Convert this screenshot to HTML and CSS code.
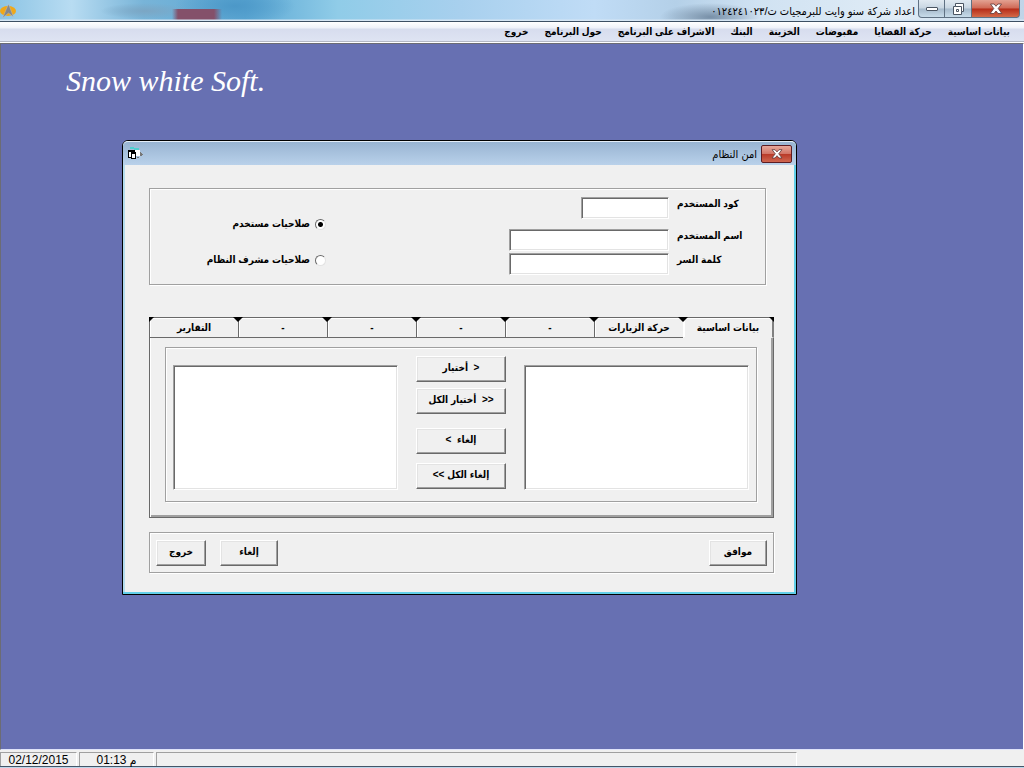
FILE: index.html
```html
<!DOCTYPE html>
<html lang="ar" dir="rtl">
<head>
<meta charset="utf-8">
<title>اعداد شركة سنو وايت للبرمجيات</title>
<link rel="stylesheet" href="styles.css">
</head>
<body>
<header class="titlebar">
  <div class="window-buttons">
    <button class="win-btn win-close" type="button" aria-label="إغلاق"><svg width="14" height="12" viewBox="0 0 14 12"><path d="M1.500 1h3.600L7 3.300 8.900 1h3.600L9.200 5.500l3.600 5H9L7 8l-2 2.500H1.200l3.600-5z" fill="#fff" stroke="#5d3838" stroke-width=".8"/></svg></button>
    <button class="win-btn" type="button" aria-label="استعادة"><svg width="14" height="14" viewBox="0 0 14 14"><path d="M4.500 1.500h8v8h-2v3h-8v-8h2z" fill="#fff" stroke="#4a5562"/><path d="M4.500 4.500h6v5M5.500 7.500h2v2h-2z" fill="none" stroke="#4a5562"/></svg></button>
    <button class="win-btn" type="button" aria-label="تصغير"><svg width="14" height="6" viewBox="0 0 14 6"><rect x="1.500" y="1.500" width="11" height="3" rx=".5" fill="#fff" stroke="#4a5562"/></svg></button>
  </div>
  <h1 class="app-title">اعداد شركة سنو وايت للبرمجيات ت/٠١٢٤٢٤١٠٢٣</h1>
  <svg class="app-icon" width="17" height="17" viewBox="0 0 17 17"><ellipse cx="8" cy="8" rx="8" ry="5" fill="#f0a818"/><path d="M8.500 1l5 13-5-4L2.500 15z" fill="#85878c" stroke="#c5c7ca" stroke-width=".4"/></svg>
</header>
<nav class="menubar">
  <button type="button">بيانات اساسية</button>
  <button type="button">حركة القضايا</button>
  <button type="button">مقبوضات</button>
  <button type="button">الخزينة</button>
  <button type="button">البنك</button>
  <button type="button">الاشراف على البرنامج</button>
  <button type="button">حول البرنامج</button>
  <button type="button">خروج</button>
</nav>
<main class="workspace">
  <p class="brand" dir="ltr">Snow white Soft.</p>
  <section class="dialog" aria-labelledby="dialog-title">
    <header class="dialog-bar">
      <button class="dialog-close" type="button" aria-label="إغلاق"><svg width="12" height="10" viewBox="0 0 12 10"><path d="M1 .7h3L6 2.900 8 .7h3L7.700 4.800 11 9H8L6 6.700 4 9H1l3.300-4.200z" fill="#fff" stroke="#5d3838" stroke-width=".8"/></svg></button>
      <h2 id="dialog-title">امن النظام</h2>
      <svg class="dialog-icon" width="17" height="13" viewBox="0 0 17 13" shape-rendering="crispEdges"><path d="M3 0h4v1h5v2H7V2H3z" fill="#4fd0d0"/><path d="M8 3h5v6H9z" fill="#fff"/><path d="M13 5h1v1h1v1h1v1h-1v1h-2zM10 10h2v1h-2z" fill="#777"/><path d="M1 3h7v8H1z" fill="#000"/><path d="M2 5h5v5H2z" fill="#fff"/><path d="M4 5h5v7H4z" fill="#000"/><path d="M5 7h3v4H5z" fill="#fff"/></svg>
    </header>
    <form class="dialog-body">
      <div class="frame user-frame">
        <div class="fields">
          <div class="field field-code"><label for="code">كود المستخدم</label><input class="short" id="code" type="text"></div>
          <div class="field"><label for="name">اسم المستخدم</label><input id="name" type="text"></div>
          <div class="field"><label for="pass">كلمة السر</label><input id="pass" type="password"></div>
        </div>
        <div class="roles">
          <label><input type="radio" name="role" checked>صلاحيات مستخدم</label>
          <label><input type="radio" name="role">صلاحيات مشرف النظام</label>
        </div>
      </div>
      <div class="tabs">
        <div class="tab-row" role="tablist">
          <button class="tab active" type="button" role="tab" aria-selected="true">بيانات اساسية</button>
          <button class="tab" type="button" role="tab">حركة الزيارات</button>
          <button class="tab" type="button" role="tab">-</button>
          <button class="tab" type="button" role="tab">-</button>
          <button class="tab" type="button" role="tab">-</button>
          <button class="tab" type="button" role="tab">-</button>
          <button class="tab" type="button" role="tab">التقارير</button>
        </div>
        <div class="tab-panel" role="tabpanel">
          <div class="frame picker">
            <select class="list" size="8" aria-label="المتاح"></select>
            <div class="moves">
              <button class="btn" type="button">&lt;&nbsp; أختيار</button>
              <button class="btn" type="button">&lt;&lt;&nbsp; أختيار الكل</button>
              <button class="btn remove" type="button">إلغاء &nbsp;&gt;</button>
              <button class="btn" type="button">إلغاء الكل &gt;&gt;</button>
            </div>
            <select class="list" size="8" aria-label="المختار"></select>
          </div>
        </div>
      </div>
      <div class="frame actions">
        <button class="btn ok" type="button">موافق</button>
        <button class="btn cancel" type="button">إلغاء</button>
        <button class="btn exit" type="button">خروج</button>
      </div>
    </form>
  </section>
</main>
<footer class="statusbar" dir="ltr">
  <span class="cell date">02/12/2015</span>
  <span class="cell time">01:13 م</span>
  <span class="cell message"></span>
</footer>
</body>
</html>
```
FILE: styles.css
```css
* { box-sizing: border-box; }
body {
  margin: 0;
  min-height: 100vh;
  display: flex;
  flex-direction: column;
  font: bold 10px/14px "Liberation Sans", "DejaVu Sans Condensed", "DejaVu Sans", sans-serif;
  color: #000;
  background: #f0f0f0;
}
button, input, select { font: inherit; color: inherit; margin: 0; }
h1, h2, p { margin: 0; font: inherit; }

.titlebar {
  height: 22px;
  display: flex;
  align-items: flex-start;
  padding: 0 4px 0 0;
  border-bottom: 1px solid #3d4f63;
  background:
    linear-gradient(transparent 19px, #d6e6f4 20px),
    linear-gradient(90deg, transparent 172px, #84506a 178px, #84506a 214px, transparent 222px) 0 9px / 100% 12px no-repeat,
    radial-gradient(ellipse 45px 8px at 145px 11px, #7ba6c4, transparent),
    radial-gradient(ellipse 60px 20px at 235px 6px, #4c98c8, transparent),
    radial-gradient(ellipse 50px 14px at 710px 17px, #7890a8, transparent),
    linear-gradient(90deg, #8cc4e4, #b8dcf2 7%, #78b4d8 14%, #5ca8d4 24%, #90cce8 33%, #a8d0ee 45%, #c0dcf6 58%, #b4d0e8 66%, #d0e2f2 74%, #e0ecf6 88%, #c0d4e8);
}
.window-buttons { display: flex; }
.win-btn {
  width: 27px;
  height: 18px;
  padding: 0;
  display: flex;
  align-items: center;
  justify-content: center;
  border: 1px solid #5f7183;
  border-top: 0;
  border-left-width: 0;
  background: linear-gradient(#e0e9f1, #c8d6e2 48%, #a5b9cb 52%, #c8dcea);
}
.win-btn:last-child { border-left-width: 1px; border-radius: 0 0 0 4px; }
.win-close {
  width: 48px;
  border-radius: 0 0 4px 0;
  background: linear-gradient(#e3a292, #cf6955 48%, #b52c18 52%, #d46a48);
}
.app-title { flex: 1; margin-right: 3px; font-size: 11px; line-height: 22px; font-weight: normal; white-space: nowrap; }
.app-icon { margin-top: 3px; }

.menubar {
  height: 21px;
  display: flex;
  gap: 16px;
  padding: 0 14px;
  border-bottom: 1px solid #fff;
  box-shadow: inset 0 -1px #b4b8c4;
  background: linear-gradient(#fff, #eef1f9 6px, #d7ddee 7px, #dfe4f3);
}
.menubar button { border: 0; padding: 0; background: none; white-space: nowrap; }

.workspace {
  flex: 1;
  position: relative;
  background: #6770b2;
  border: 1px solid #6c6c74;
  border-right-color: #fff;
  border-bottom-color: #dfe3fa;
}
.brand {
  padding: 19px 65px;
  font: italic 30px/36px "Liberation Serif", serif;
  color: #fff;
}
.dialog {
  position: absolute;
  left: 121px;
  top: 96px;
  width: 675px;
  border: 1px solid #000;
  border-radius: 6px 6px 0 0;
  background: #f0f0f0;
  box-shadow: inset -2px -2px #62cfe8, inset 2px 0 #b5dcec;
}
.dialog-bar {
  height: 24px;
  display: flex;
  align-items: center;
  padding: 0 4px;
  border-top: 1px solid #e4eef8;
  border-radius: 5px 5px 0 0;
  background: linear-gradient(#98b4d2, #b9d1ea);
}
.dialog-close {
  width: 31px;
  height: 18px;
  padding: 0;
  display: flex;
  align-items: center;
  justify-content: center;
  border: 1px solid #5c1c22;
  border-radius: 2px;
  background: linear-gradient(#e7a89c, #d27566 48%, #b93a28 52%, #cf6650);
}
.dialog-bar h2 { flex: 1; margin-right: 4px; font-size: 11px; font-weight: normal; }
.dialog-body { padding: 23px 22px 21px 26px; }

.frame {
  border: 1px solid #a0a0a0;
  box-shadow: inset 1px 1px #fff, 1px 1px #fff;
}
.user-frame {
  margin-right: 8px;
  padding: 8px 25px 9px 0;
  display: flex;
  justify-content: space-between;
}
.field { display: flex; gap: 8px; margin-bottom: 2px; }
.field-code { margin-bottom: 10px; }
.field:last-child { margin-bottom: 0; }
.field label { width: 63px; text-align: left; direction: ltr; white-space: nowrap; }
.field input, .list {
  background: #fff;
  border: 1px solid;
  border-color: #a0a0a0 #fff #fff #a0a0a0;
  border-radius: 0;
  box-shadow: inset 1px 1px #696969, inset -1px -1px #e3e3e3;
}
.field input {
  width: 160px;
  height: 22px;
  padding: 2px;
}
.field .short { width: 88px; }
.roles {
  width: 176px;
  padding-top: 20px;
  display: flex;
  flex-direction: column;
  gap: 22px;
}
.roles label { display: flex; align-items: center; gap: 5px; white-space: nowrap; }
.roles input {
  appearance: none;
  width: 11px;
  height: 11px;
  border: 1px solid;
  border-color: #696969 #e3e3e3 #e3e3e3 #696969;
  border-radius: 50%;
  background: #fff;
}
.roles input:checked { background: radial-gradient(circle, #000 2px, #fff 3px); }

.tabs { margin-top: 32px; }
.tab-row { display: flex; }
.tab {
  position: relative;
  flex: 1;
  height: 21px;
  padding: 0;
  background: #f0f0f0;
  border: 1px solid #696969;
  border-right-width: 0;
  box-shadow: inset 1px 1px #fff;
}
.tab::before, .tab:last-child::after {
  content: "";
  position: absolute;
  right: -5px;
  top: -1px;
  border: 5px solid transparent;
  border-top-color: #000;
  border-bottom: 0;
}
.tab:first-child::before { right: -2px; border-right: 0; }
.tab:last-child::after { right: auto; left: -1px; border-left: 0; }
.active { border-bottom-color: transparent; border-right: 2px solid #808080; border-left-color: #fff; }
.tab-panel {
  padding: 9px 16px 15px 15px;
  border: 1px solid #696969;
  border-top: 0;
  box-shadow: inset 1px 0 #fff, inset -2px -2px #a0a0a0;
}
.picker {
  display: flex;
  justify-content: space-between;
  padding: 8px 7px 11px;
}
.list {
  width: 225px;
  height: 125px;
  margin-top: 9px;
  overflow: hidden;
}
.moves { display: flex; flex-direction: column; gap: 6px; width: 90px; }
.moves .remove { margin: 8px 0 3px; }
.btn {
  height: 26px;
  padding: 0 0 3px;
  background: #f0f0f0;
  border: 1px solid;
  border-color: #fff #696969 #696969 #fff;
  box-shadow: inset -1px -1px #a0a0a0, inset 1px 1px #e3e3e3;
  white-space: nowrap;
}
.actions {
  margin-top: 14px;
  height: 41px;
  padding: 7px 6px;
  display: flex;
}
.ok { width: 58px; margin-left: auto; }
.cancel { width: 58px; margin-left: 14px; }
.exit { width: 50px; }

.statusbar {
  height: 16px;
  margin-top: 2px;
  display: flex;
  gap: 2px;
  font-weight: normal;
  font-size: 12px;
  border-bottom: 1px solid #bcd6ea;
  box-shadow: inset 0 -1px #435568;
}
.cell {
  height: 14px;
  text-align: center;
  white-space: nowrap;
  border: 1px solid #a0a0a0;
  border-right-color: #fff;
  border-bottom: 0;
}
.date { width: 77px; }
.time { width: 75px; }
.message { flex: 0 1 641px; }
```
